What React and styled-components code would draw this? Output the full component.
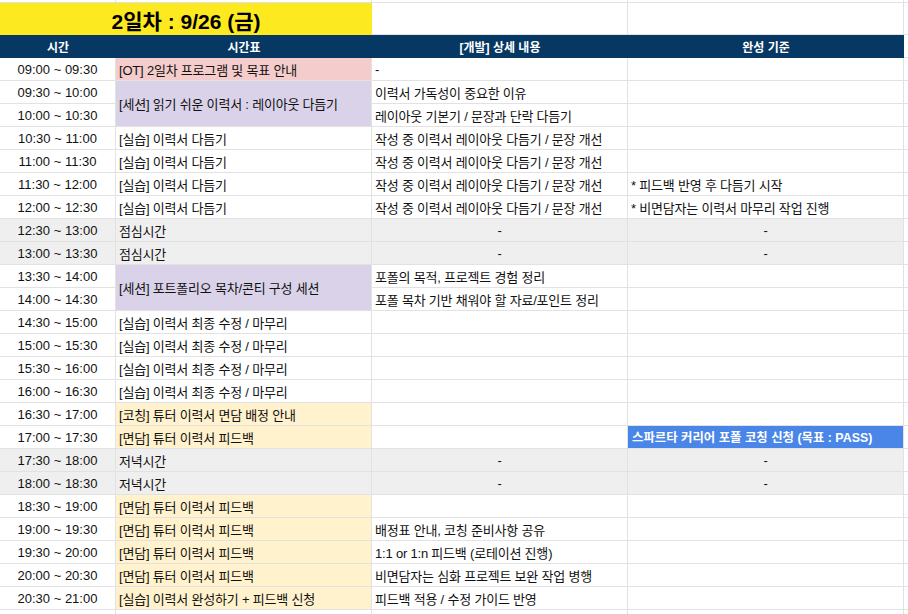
import React from 'react';
import styled, { createGlobalStyle, css } from 'styled-components';

const GlobalStyle = createGlobalStyle`
  html, body {
    margin: 0;
    padding: 0;
    background: #ffffff;
  }
  body {
    font-family: "Liberation Sans", Arial, "Noto Sans CJK KR", sans-serif;
  }
`;

const TONES = {
  white: '#ffffff',
  pink: '#f4cccc',
  lavender: '#d9d2e9',
  cream: '#fff2cc',
  grey: '#efefef',
  blue: '#4a86e8',
  navy: '#073763',
  yellow: '#fde91f',
};

const Sheet = styled.div`
  display: grid;
  grid-template-columns: 116px 256px 256px 276px 4px;
  grid-template-rows: 3px 32px 23px;
  grid-auto-rows: 23px;
  width: 908px;
  height: 614px;
  overflow: hidden;
`;

const Cell = styled.div`
  box-sizing: border-box;
  display: flex;
  align-items: center;
  justify-content: ${({ $align }) => ($align === 'center' ? 'center' : 'flex-start')};
  grid-column: ${({ $col, $colSpan }) => `${$col} / span ${$colSpan || 1}`};
  grid-row: ${({ $rowSpan }) => ($rowSpan ? `span ${$rowSpan}` : 'auto')};
  padding: 0 3px;
  background: ${({ $tone }) => TONES[$tone || 'white']};
  border-right: 1px solid #e2e2e2;
  border-bottom: 1px solid #e2e2e2;
  color: #111;
  font-size: 13px;
  letter-spacing: -0.2px;
  white-space: nowrap;
  overflow: hidden;

  ${({ $tone }) =>
    $tone === 'blue' &&
    css`
      color: #ffffff;
      font-size: 12.4px;
      font-weight: 700;
      letter-spacing: 0;
      padding-left: 4px;
    `}
`;

const TimeCell = styled(Cell)`
  justify-content: center;
  letter-spacing: 0;
`;

const HeadCell = styled(Cell)`
  background: ${TONES.navy};
  border-right: none;
  border-bottom: none;
  color: #ffffff;
  font-size: 12px;
  font-weight: 700;
  letter-spacing: 0;
  justify-content: center;
`;

const TitleCell = styled(Cell)`
  background: ${TONES.yellow};
  border-right: none;
  border-bottom: none;
  justify-content: center;
  font-size: 21px;
  font-weight: 700;
  letter-spacing: 0;
  color: #000;
  padding-top: 1px;
`;

const rows = [
  { time: '09:00 ~ 09:30', b: { text: '[OT] 2일차 프로그램 및 목표 안내', tone: 'pink' }, c: '-' },
  { time: '09:30 ~ 10:00', b: { text: '[세션] 읽기 쉬운 이력서 : 레이아웃 다듬기', tone: 'lavender', span: 2 }, c: '이력서 가독성이 중요한 이유' },
  { time: '10:00 ~ 10:30', c: '레이아웃 기본기 / 문장과 단락 다듬기' },
  { time: '10:30 ~ 11:00', b: { text: '[실습] 이력서 다듬기' }, c: '작성 중 이력서 레이아웃 다듬기 / 문장 개선' },
  { time: '11:00 ~ 11:30', b: { text: '[실습] 이력서 다듬기' }, c: '작성 중 이력서 레이아웃 다듬기 / 문장 개선' },
  { time: '11:30 ~ 12:00', b: { text: '[실습] 이력서 다듬기' }, c: '작성 중 이력서 레이아웃 다듬기 / 문장 개선', d: '* 피드백 반영 후 다듬기 시작' },
  { time: '12:00 ~ 12:30', b: { text: '[실습] 이력서 다듬기' }, c: '작성 중 이력서 레이아웃 다듬기 / 문장 개선', d: '* 비면담자는 이력서 마무리 작업 진행' },
  { time: '12:30 ~ 13:00', b: { text: '점심시간' }, tone: 'grey' },
  { time: '13:00 ~ 13:30', b: { text: '점심시간' }, tone: 'grey' },
  { time: '13:30 ~ 14:00', b: { text: '[세션] 포트폴리오 목차/콘티 구성 세션', tone: 'lavender', span: 2 }, c: '포폴의 목적, 프로젝트 경험 정리' },
  { time: '14:00 ~ 14:30', c: '포폴 목차 기반 채워야 할 자료/포인트 정리' },
  { time: '14:30 ~ 15:00', b: { text: '[실습] 이력서 최종 수정 / 마무리' } },
  { time: '15:00 ~ 15:30', b: { text: '[실습] 이력서 최종 수정 / 마무리' } },
  { time: '15:30 ~ 16:00', b: { text: '[실습] 이력서 최종 수정 / 마무리' } },
  { time: '16:00 ~ 16:30', b: { text: '[실습] 이력서 최종 수정 / 마무리' } },
  { time: '16:30 ~ 17:00', b: { text: '[코칭] 튜터 이력서 면담 배정 안내', tone: 'cream' } },
  { time: '17:00 ~ 17:30', b: { text: '[면담] 튜터 이력서 피드백', tone: 'cream' }, d: '스파르타 커리어 포폴 코칭 신청 (목표 : PASS)', dTone: 'blue' },
  { time: '17:30 ~ 18:00', b: { text: '저녁시간' }, tone: 'grey' },
  { time: '18:00 ~ 18:30', b: { text: '저녁시간' }, tone: 'grey' },
  { time: '18:30 ~ 19:00', b: { text: '[면담] 튜터 이력서 피드백', tone: 'cream' } },
  { time: '19:00 ~ 19:30', b: { text: '[면담] 튜터 이력서 피드백', tone: 'cream' }, c: '배정표 안내, 코칭 준비사항 공유' },
  { time: '19:30 ~ 20:00', b: { text: '[면담] 튜터 이력서 피드백', tone: 'cream' }, c: '1:1 or 1:n 피드백 (로테이션 진행)' },
  { time: '20:00 ~ 20:30', b: { text: '[면담] 튜터 이력서 피드백', tone: 'cream' }, c: '비면담자는 심화 프로젝트 보완 작업 병행' },
  { time: '20:30 ~ 21:00', b: { text: '[실습] 이력서 완성하기 + 피드백 신청', tone: 'cream' }, c: '피드백 적용 / 수정 가이드 반영' },
];

function ScheduleRow({ row }) {
  const grey = row.tone === 'grey';
  return (
    <>
      <TimeCell $col={1} $tone={row.tone}>{row.time}</TimeCell>
      {row.b && (
        <Cell $col={2} $rowSpan={row.b.span} $tone={row.tone || row.b.tone}>
          {row.b.text}
        </Cell>
      )}
      <Cell $col={3} $tone={row.tone} $align={grey ? 'center' : 'left'}>
        {grey ? '-' : row.c}
      </Cell>
      <Cell $col={4} $tone={row.tone || row.dTone} $align={grey ? 'center' : 'left'}>
        {grey ? '-' : row.d}
      </Cell>
      <Cell $col={5} />
    </>
  );
}

export default function App() {
  return (
    <>
      <GlobalStyle />
      <Sheet>
        {[1, 2, 3, 4, 5].map((c) => (
          <Cell key={`top-${c}`} $col={c} />
        ))}

        <TitleCell $col={1} $colSpan={2}>2일차 : 9/26 (금)</TitleCell>
        <Cell $col={3} />
        <Cell $col={4} />
        <Cell $col={5} />

        <HeadCell $col={1}>시간</HeadCell>
        <HeadCell $col={2}>시간표</HeadCell>
        <HeadCell $col={3}>[개발] 상세 내용</HeadCell>
        <HeadCell $col={4}>완성 기준</HeadCell>
        <Cell $col={5} />

        {rows.map((row) => (
          <ScheduleRow key={row.time} row={row} />
        ))}

        {[1, 2, 3, 4, 5].map((c) => (
          <Cell key={`end-${c}`} $col={c} />
        ))}
      </Sheet>
    </>
  );
}
